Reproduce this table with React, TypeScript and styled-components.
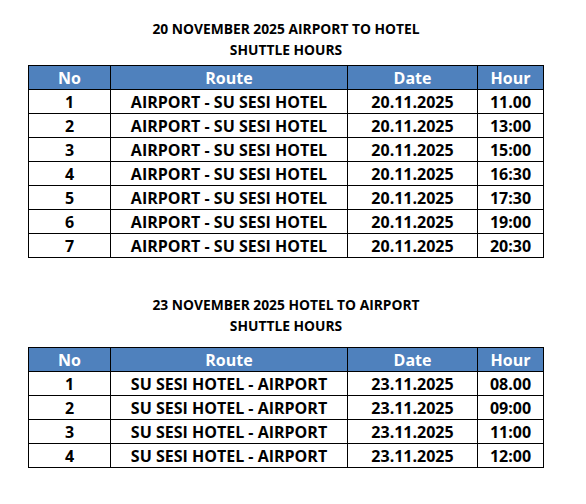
import styled, { createGlobalStyle } from "styled-components";

type Trip = { no: number; route: string; date: string; hour: string };

const arrivals: Trip[] = [
  { no: 1, route: "AIRPORT - SU SESI HOTEL", date: "20.11.2025", hour: "11.00" },
  { no: 2, route: "AIRPORT - SU SESI HOTEL", date: "20.11.2025", hour: "13:00" },
  { no: 3, route: "AIRPORT - SU SESI HOTEL", date: "20.11.2025", hour: "15:00" },
  { no: 4, route: "AIRPORT - SU SESI HOTEL", date: "20.11.2025", hour: "16:30" },
  { no: 5, route: "AIRPORT - SU SESI HOTEL", date: "20.11.2025", hour: "17:30" },
  { no: 6, route: "AIRPORT - SU SESI HOTEL", date: "20.11.2025", hour: "19:00" },
  { no: 7, route: "AIRPORT - SU SESI HOTEL", date: "20.11.2025", hour: "20:30" },
];

const departures: Trip[] = [
  { no: 1, route: "SU SESI HOTEL - AIRPORT", date: "23.11.2025", hour: "08.00" },
  { no: 2, route: "SU SESI HOTEL - AIRPORT", date: "23.11.2025", hour: "09:00" },
  { no: 3, route: "SU SESI HOTEL - AIRPORT", date: "23.11.2025", hour: "11:00" },
  { no: 4, route: "SU SESI HOTEL - AIRPORT", date: "23.11.2025", hour: "12:00" },
];

// content widths; with collapsed 1px borders each column takes one more pixel
const columns = [
  { label: "No", width: 81 },
  { label: "Route", width: 236 },
  { label: "Date", width: 129 },
  { label: "Hour", width: 65 },
];

const GlobalStyle = createGlobalStyle`
  html, body {
    margin: 0;
    padding: 0;
    background: #ffffff;
  }
  body {
    font-family: "Open Sans", "Liberation Sans", sans-serif;
    color: #000000;
  }
`;

const Page = styled.div`
  width: 516px;
  padding: 18px 0 0 28px;
`;

const Block = styled.section<{ gap: number }>`
  margin-top: ${({ gap }) => gap}px;
`;

const Title = styled.h2<{ after: number }>`
  margin: 0 0 ${({ after }) => after}px;
  font-size: 13.8px;
  line-height: 21px;
  font-weight: 700;
  text-align: center;
`;

const Table = styled.table`
  border-collapse: collapse;
  table-layout: fixed;
`;

const HeadCell = styled.th<{ w: number }>`
  width: ${({ w }) => w}px;
  height: 23px;
  padding: 0;
  border: 1px solid #000;
  background: #4f81bd;
  color: #ffffff;
  font-size: 16px;
  font-weight: 700;
  line-height: 20px;
  text-align: center;
  vertical-align: middle;
`;

const Cell = styled.td`
  height: 23px;
  padding: 0;
  border: 1px solid #000;
  font-size: 16px;
  font-weight: 700;
  line-height: 20px;
  text-align: center;
  vertical-align: middle;
  white-space: nowrap;
`;

type ScheduleProps = { title: string; trips: Trip[]; after: number };

const Schedule = ({ title, trips, after }: ScheduleProps) => (
  <>
    <Title after={after}>
      {title}
      <br />
      SHUTTLE HOURS
    </Title>
    <Table>
      <thead>
        <tr>
          {columns.map((c) => (
            <HeadCell key={c.label} w={c.width}>
              {c.label}
            </HeadCell>
          ))}
        </tr>
      </thead>
      <tbody>
        {trips.map((t) => (
          <tr key={t.no}>
            <Cell>{t.no}</Cell>
            <Cell>{t.route}</Cell>
            <Cell>{t.date}</Cell>
            <Cell>{t.hour}</Cell>
          </tr>
        ))}
      </tbody>
    </Table>
  </>
);

export default function App() {
  return (
    <>
      <GlobalStyle />
      <Page>
        <Block gap={0}>
          <Schedule title="20 NOVEMBER 2025 AIRPORT TO HOTEL" trips={arrivals} after={5} />
        </Block>
        <Block gap={36}>
          <Schedule title="23 NOVEMBER 2025 HOTEL TO AIRPORT" trips={departures} after={11} />
        </Block>
      </Page>
    </>
  );
}
